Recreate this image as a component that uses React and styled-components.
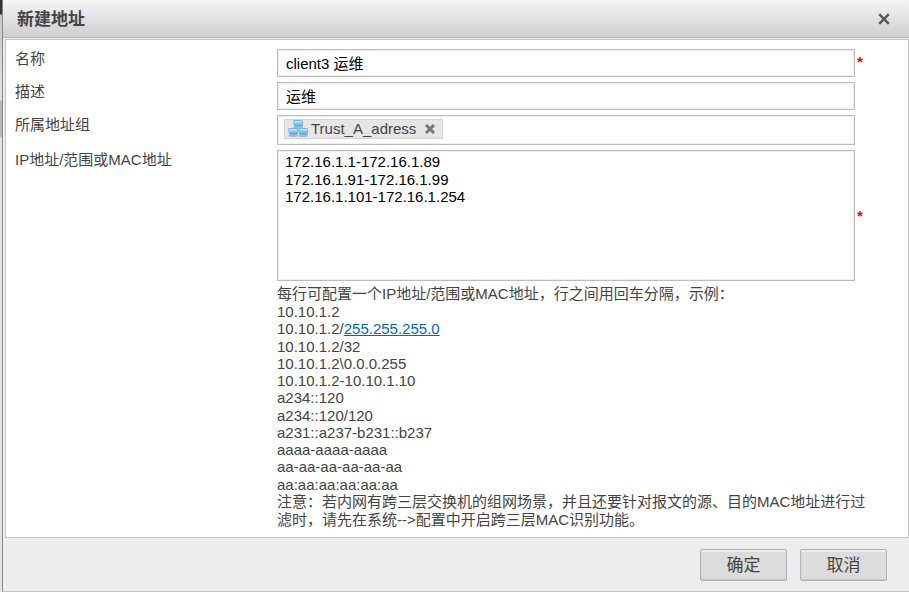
import React, { useState } from "react";
import styled, { createGlobalStyle } from "styled-components";

const GlobalStyle = createGlobalStyle`
  *, *::before, *::after { box-sizing: border-box; }
  body {
    margin: 0;
    background: #e4e4e4;
    color: #444;
    font-family: "Liberation Sans", "Noto Sans CJK SC", sans-serif;
    font-size: 15px;
    line-height: 18px;
  }
  button, input, textarea { font: inherit; }
`;

const Page = styled.div`
  min-height: 100vh;
  display: flex;
  padding-left: 2px;
  background: linear-gradient(#3a3035 14px, #c8c8c8 15px, #e4e4e4 100px, #bbb 101px, #bbb 137px, #e4e4e4 138px);
`;

const Dialog = styled.form`
  flex: 1;
  min-width: 0;
  display: flex;
  flex-direction: column;
  background: #ededed;
  border-left: 1px solid #888;
  border-bottom: 1px solid #c4c4c4;
`;

const Header = styled.header`
  display: flex;
  align-items: center;
  justify-content: space-between;
  height: 38px;
  padding: 0 16px 0 14px;
  background: linear-gradient(#f5f5f5, #cecece);
  border-bottom: 1px solid #b8b8b8;
`;

const Title = styled.h1`
  margin: 0;
  padding-top: 2px;
  font-size: 17px;
  line-height: 24px;
`;

const IconButton = styled.button`
  display: flex;
  align-items: center;
  justify-content: center;
  width: ${(p) => p.$size}px;
  height: ${(p) => p.$size}px;
  padding: 0;
  border: 0;
  background: none;
  color: ${(p) => p.$color};
  cursor: pointer;
`;

const Body = styled.main`
  flex: 1;
  display: flex;
  flex-direction: column;
  gap: 5px;
  margin: 1px 0 0 2px;
  padding: 9px 0 8px 9px;
  background: #fff;
  border: 1px solid #c4c4c4;
`;

const Row = styled.div`
  display: grid;
  grid-template-columns: 262px minmax(0, 1fr) 53px;
  align-items: start;
`;

const Label = styled.label`
  padding-top: 1px;
`;

const control = `
  display: block;
  width: 100%;
  margin: 0;
  border: 1px solid #bbbbc0;
  border-radius: 0;
  box-shadow: inset -1px -1px 0 #eee, inset 1px 1px 0 #eee;
  background: #fff;
  color: #000;
  outline: none;
`;

const TextInput = styled.input`
  ${control}
  height: 28px;
  padding: 0 8px 2px;
`;

const TagBox = styled.div`
  ${control}
  display: flex;
  align-items: flex-start;
  height: 30px;
  padding: 3px 6px;
`;

const Tag = styled.span`
  display: flex;
  align-items: center;
  height: 20px;
  padding: 0 4px 0 3px;
  border: 1px solid #d4d4d4;
  background: #e6e6e6;
  color: #444;
`;

const TagText = styled.span`
  margin: 0 6px 0 3px;
`;

const TextArea = styled.textarea`
  ${control}
  height: 131px;
  padding: 2px 7px;
  line-height: 1.17;
  resize: none;
`;

const Required = styled.span`
  align-self: ${(p) => (p.$middle ? "center" : "start")};
  padding: ${(p) => (p.$middle ? 0 : 4)}px 0 0 2px;
  color: #f00;
  font-weight: bold;
`;

const Help = styled.section`
  margin: -1px 32px 0 262px;
`;

const Paragraph = styled.p`
  margin: 0;
`;

const Examples = styled.ul`
  margin: 0;
  padding: 0;
  list-style: none;
  line-height: 1.15;
`;

const Link = styled.a`
  color: #0066cc;
  text-decoration: underline;
`;

const Footer = styled.footer`
  display: flex;
  justify-content: flex-end;
  gap: 13px;
  padding: 11px 22px 10px;
`;

const ActionButton = styled.button`
  width: 87px;
  height: 32px;
  padding: 2px 0 0;
  border: 1px solid #b0b0b8;
  border-radius: 2px;
  box-shadow: inset 0 2px 0 #ececf0, inset 0 -1px 0 #c8c8cc;
  background: #dcdcdc;
  color: #444;
  font-size: 17px;
  cursor: pointer;
`;

function Cross({ size, width }) {
  return (
    <svg width={size} height={size} viewBox="0 0 10 10" aria-hidden="true">
      <path d="M1 1L9 9M9 1L1 9" stroke="currentColor" strokeWidth={width} />
    </svg>
  );
}

function Computer({ x, y }) {
  return (
    <g transform={`translate(${x} ${y})`}>
      <path d="M2 6h7l1 2-2 1H2L0 8z" fill="#b4b5c2" />
      <path d="M0 1L1 0h8l1 1v5L9 7H2L1 6z" fill="#7fb4dc" />
      <path d="M1 1h8v5H2z" fill="url(#screen)" />
    </g>
  );
}

function NetworkIcon() {
  return (
    <svg width="20" height="18" viewBox="0 0 20 18" aria-hidden="true">
      <defs>
        <linearGradient id="screen" x1="0" y1="0" x2="0" y2="1">
          <stop offset="0" stopColor="#c2eefc" />
          <stop offset="1" stopColor="#3fabf4" />
        </linearGradient>
      </defs>
      <path d="M4 9L7 7M13 7L16 9" fill="none" stroke="#8a8d9c" />
      <Computer x={5} y={0} />
      <Computer x={0} y={8} />
      <Computer x={10} y={8} />
    </svg>
  );
}

const examples = [
  "10.10.1.2/32",
  "10.10.1.2\\0.0.0.255",
  "10.10.1.2-10.10.1.10",
  "a234::120",
  "a234::120/120",
  "a231::a237-b231::b237",
  "aaaa-aaaa-aaaa",
  "aa-aa-aa-aa-aa-aa",
  "aa:aa:aa:aa:aa:aa",
];

export default function App() {
  const [hasGroup, setHasGroup] = useState(true);
  return (
    <Page>
      <GlobalStyle />
      <Dialog onSubmit={(e) => e.preventDefault()}>
        <Header>
          <Title>新建地址</Title>
          <IconButton type="button" $size={18} $color="#555" aria-label="关闭">
            <Cross size={12} width={2} />
          </IconButton>
        </Header>
        <Body>
          <Row>
            <Label htmlFor="name">名称</Label>
            <TextInput id="name" defaultValue="client3 运维" required />
            <Required>*</Required>
          </Row>
          <Row>
            <Label htmlFor="description">描述</Label>
            <TextInput id="description" defaultValue="运维" />
          </Row>
          <Row>
            <Label as="span" id="group-label">所属地址组</Label>
            <TagBox role="group" aria-labelledby="group-label">
              {hasGroup && (
                <Tag>
                  <NetworkIcon />
                  <TagText>Trust_A_adress</TagText>
                  <IconButton
                    type="button"
                    $size={16}
                    $color="#777"
                    aria-label="移除 Trust_A_adress"
                    onClick={() => setHasGroup(false)}
                  >
                    <Cross size={10} width={3} />
                  </IconButton>
                </Tag>
              )}
            </TagBox>
          </Row>
          <Row>
            <Label htmlFor="addresses">IP地址/范围或MAC地址</Label>
            <TextArea
              id="addresses"
              required
              defaultValue={"172.16.1.1-172.16.1.89\n172.16.1.91-172.16.1.99\n172.16.1.101-172.16.1.254"}
            />
            <Required $middle>*</Required>
          </Row>
          <Help>
            <Paragraph>每行可配置一个IP地址/范围或MAC地址，行之间用回车分隔，示例：</Paragraph>
            <Examples>
              <li>10.10.1.2</li>
              <li>
                10.10.1.2/<Link href="#netmask">255.255.255.0</Link>
              </li>
              {examples.map((text) => (
                <li key={text}>{text}</li>
              ))}
            </Examples>
            <Paragraph>
              注意：若内网有跨三层交换机的组网场景，并且还要针对报文的源、目的MAC地址进行过滤时，请先在系统--&gt;配置中开启跨三层MAC识别功能。
            </Paragraph>
          </Help>
        </Body>
        <Footer>
          <ActionButton type="submit">确定</ActionButton>
          <ActionButton type="button">取消</ActionButton>
        </Footer>
      </Dialog>
    </Page>
  );
}
